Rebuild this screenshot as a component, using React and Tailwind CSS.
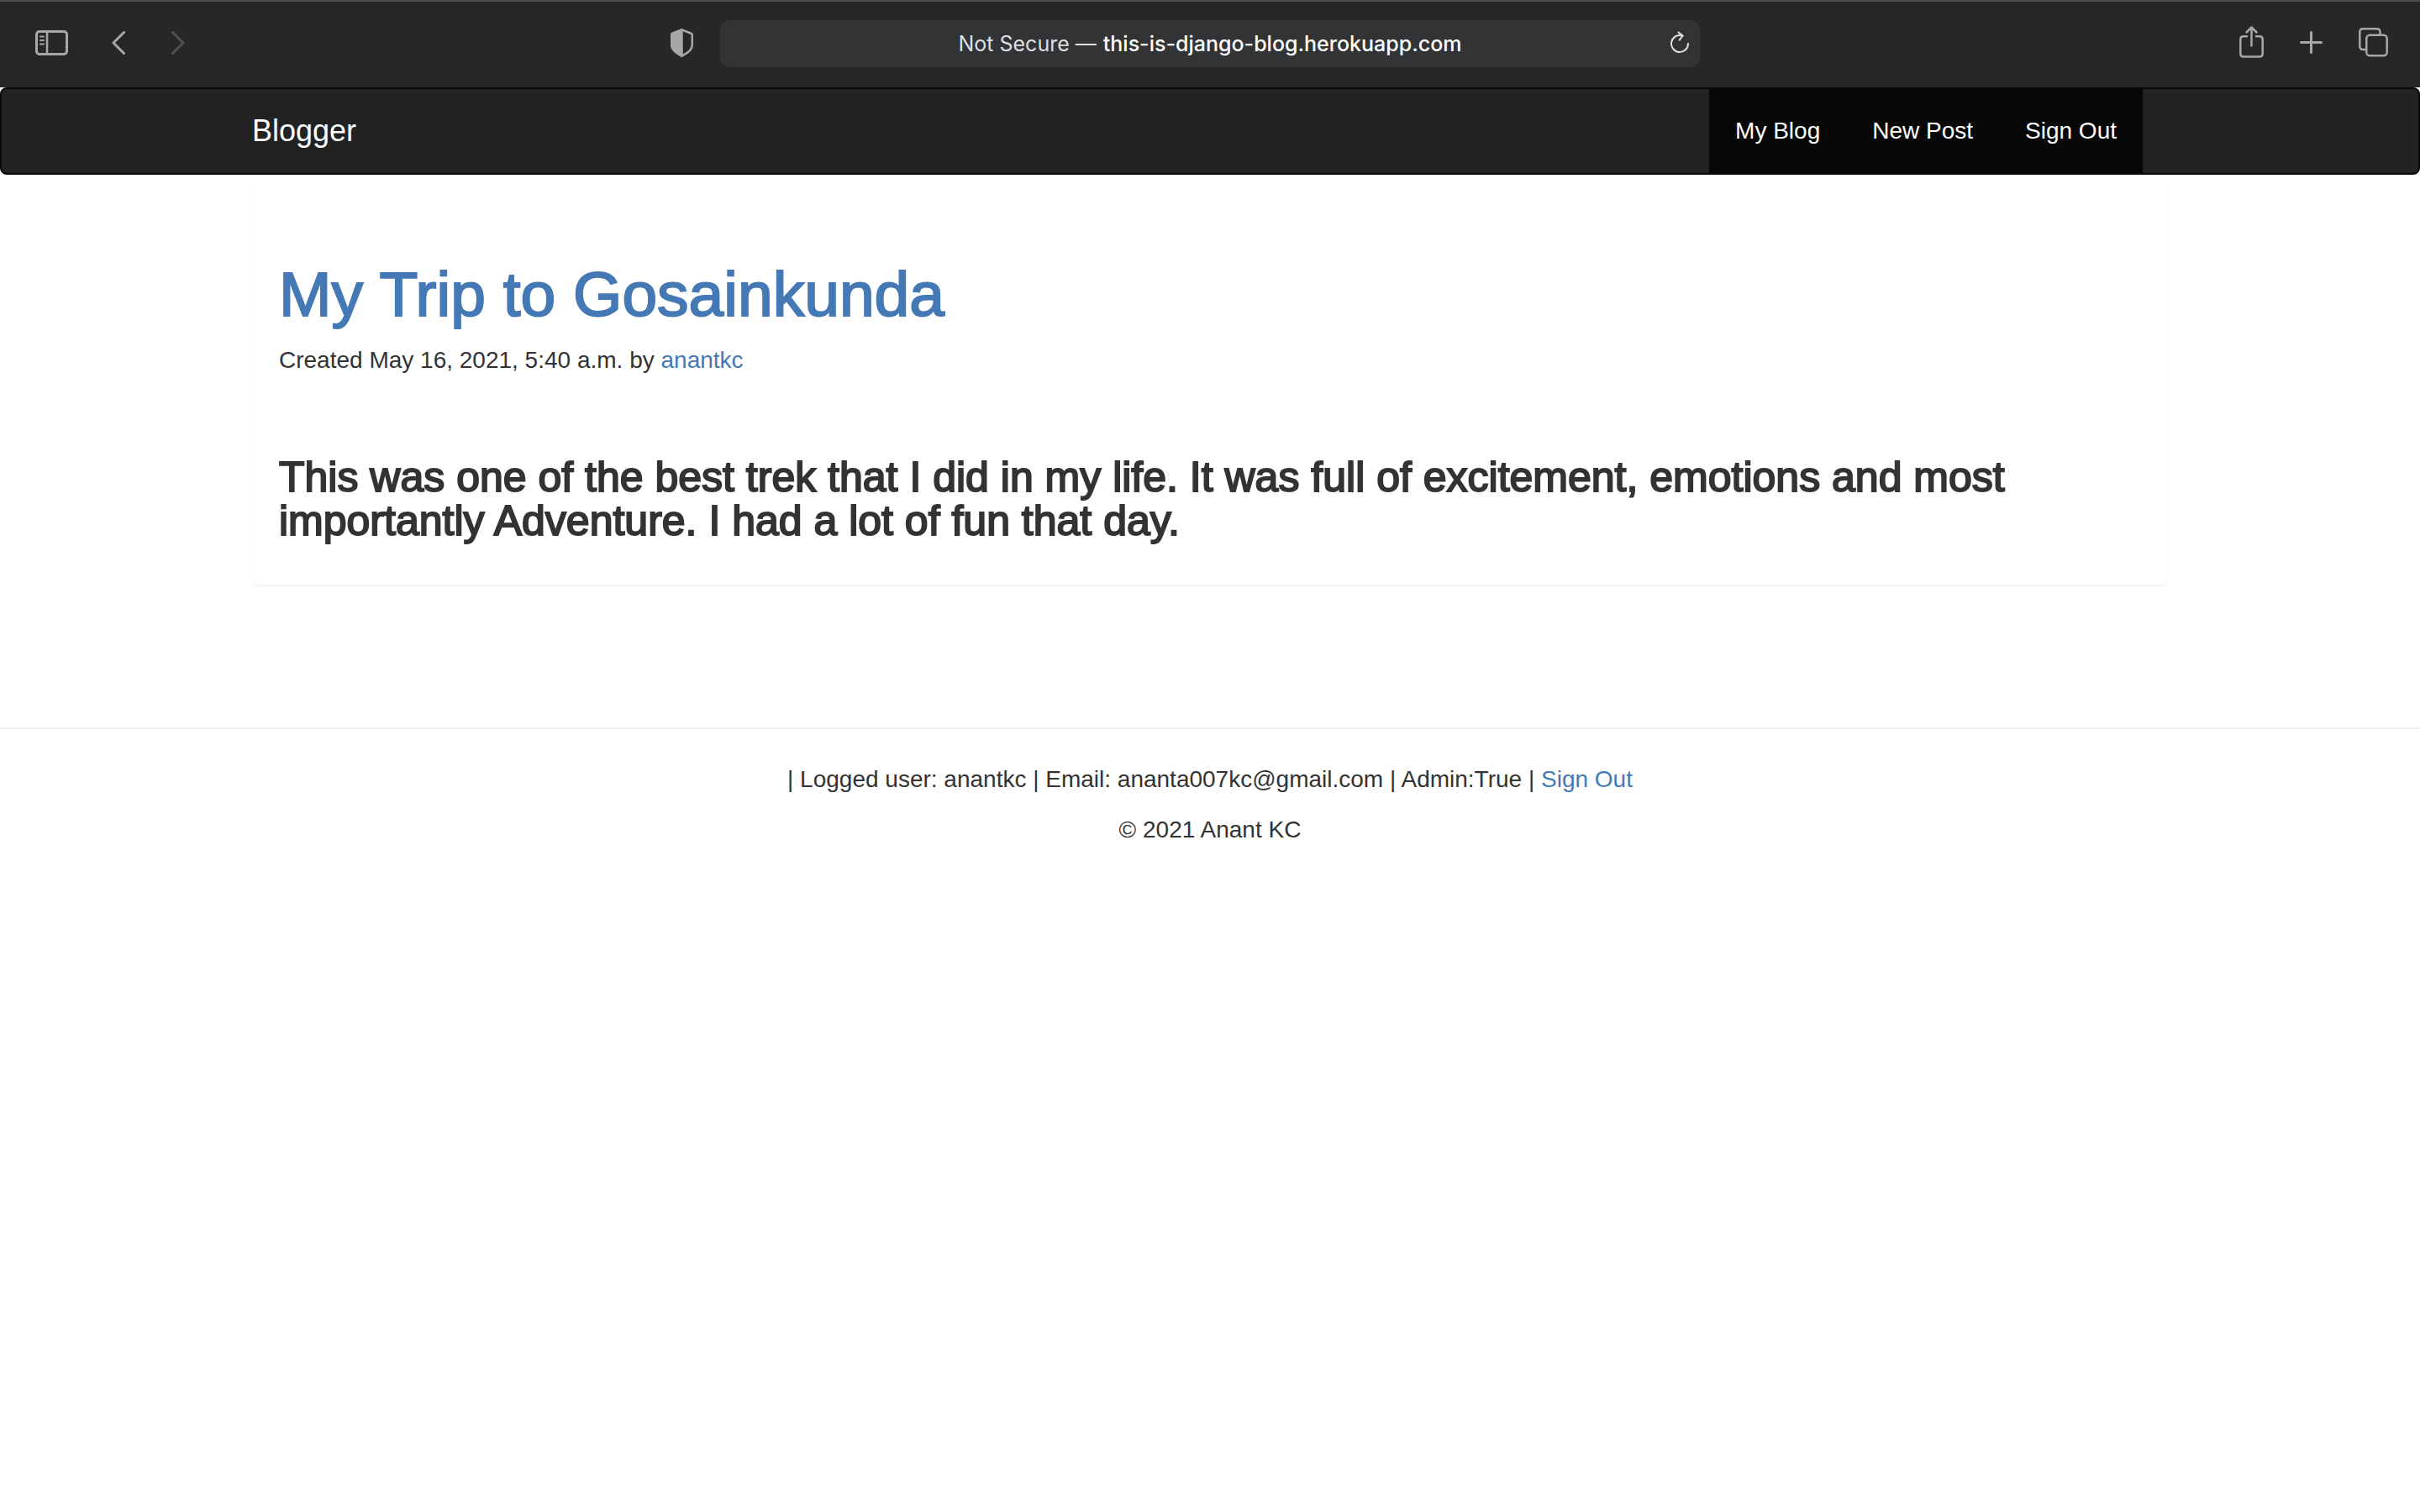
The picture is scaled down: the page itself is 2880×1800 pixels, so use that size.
function Icon({ width, height, stroke = 3, className = "", children }) {
  return (
    <svg
      width={width}
      height={height}
      viewBox={`0 0 ${width} ${height}`}
      fill="none"
      stroke="currentColor"
      strokeWidth={stroke}
      strokeLinecap="round"
      strokeLinejoin="round"
      aria-hidden="true"
      className={className}
    >
      {children}
    </svg>
  );
}

function BrowserBar() {
  return (
    <header className="grid h-[104px] grid-cols-[1fr_40.5%_1fr] items-center border-t-2 border-[#4b4d4f] bg-[#252729] pb-0.5 font-[Inter,sans-serif] text-[#a6a7a8]">
      <div className="flex items-center pr-8 pb-0.5 pl-[42px]">
        <button type="button" aria-label="Show sidebar">
          <Icon width={39} height={30}>
            <rect x="1.5" y="1.5" width="36" height="27" rx="3.5" />
            <path d="M14 2v26" strokeWidth="2.5" />
            <path d="M6 7.5h4M6 12h4M6 16.5h4" strokeWidth="2" />
          </Icon>
        </button>
        <button type="button" aria-label="Back" className="ml-[52px]">
          <Icon width={16} height={28}>
            <path d="M14.5 1.5 2 14l12.5 12.5" />
          </Icon>
        </button>
        <button type="button" aria-label="Forward" className="ml-[55px] text-[#505153]">
          <Icon width={16} height={28}>
            <path d="M1.5 1.5 14 14 1.5 26.5" />
          </Icon>
        </button>
        <button type="button" aria-label="Privacy report" className="ml-auto">
          <Icon width={27} height={34} stroke={2.5}>
            <path d="M13.5 1.5 25 6q.8.4.8 1.2V19c0 7-6.5 10.5-12.3 13.7C7.7 29.5 1.2 26 1.2 19V7.2Q1.2 6.4 2 6Z" />
            <path
              d="M13.5 1.5V32.7C7.7 29.5 1.2 26 1.2 19V7.2Q1.2 6.4 2 6Z"
              fill="currentColor"
            />
          </Icon>
        </button>
      </div>

      <div className="grid h-14 grid-cols-[1fr_auto_1fr] items-center rounded-xl bg-[#323335] px-3 text-[25px] leading-8">
        <div className="col-start-2 flex gap-2 whitespace-nowrap">
          <label htmlFor="address" className="text-[#dfdfe0]">
            Not Secure —
          </label>
          <input
            id="address"
            type="text"
            defaultValue="this-is-django-blog.herokuapp.com"
            className="bg-transparent font-medium text-white outline-none [field-sizing:content]"
          />
        </div>
        <button type="button" aria-label="Reload" className="justify-self-end pb-1 text-[#dfdfe0]">
          <Icon width={24} height={26} stroke={2}>
            <path d="M15.5 5.6A10 10 0 1 0 22 15" />
            <path d="M10.5 1.5 15.5 5.6 11.5 10.8" />
          </Icon>
        </button>
      </div>

      <div className="flex items-center justify-end pr-[38px] pb-1">
        <button type="button" aria-label="Share">
          <Icon width={29} height={38} stroke={2.5}>
            <path d="M9 12.3H5Q1.3 12.3 1.3 16V33Q1.3 36.5 5 36.5H24Q27.7 36.5 27.7 33V16Q27.7 12.3 24 12.3H20" />
            <path d="M14.5 23.5V2M8.5 7.5 14.5 1.5 20.5 7.5" />
          </Icon>
        </button>
        <button type="button" aria-label="New tab" className="ml-[43px]">
          <Icon width={27} height={27}>
            <path d="M13.5 1.5v24M1.5 13.5h24" />
          </Icon>
        </button>
        <button type="button" aria-label="Show tab overview" className="ml-[43px]">
          <Icon width={35} height={35} stroke={2.5}>
            <rect x="9.3" y="8.8" width="24.4" height="24.4" rx="4" />
            <path d="M9 26H5.3Q1.3 26 1.3 22V5.3Q1.3 1.3 5.3 1.3H21.5Q25.5 1.3 25.5 5.3V8.500" />
          </Icon>
        </button>
      </div>
    </header>
  );
}

const NAV_LINKS = ["My Blog", "New Post", "Sign Out"];

function Navbar() {
  return (
    <nav className="rounded-lg border-2 border-[#080808] bg-[#222] text-white">
      <div className="mx-auto flex max-w-[2340px] items-center justify-between pr-[60px] pl-[30px]">
        <a href="#home" className="text-4xl leading-10">
          Blogger
        </a>
        <ul className="flex bg-[#080808]">
          {NAV_LINKS.map((label) => (
            <li key={label}>
              <a href="#nav" className="block px-[31px] py-[30px] text-[28px] leading-10">
                {label}
              </a>
            </li>
          ))}
        </ul>
      </div>
    </nav>
  );
}

function Post() {
  return (
    <main className="mx-auto max-w-[2340px] px-[30px]">
      <article className="rounded-lg px-8 pt-[102px] pb-[50px] shadow-[0_2px_2px_rgba(0,0,0,0.05)]">
        <h1 className="text-[75px] leading-[80px] text-[#4479b5] [-webkit-text-stroke:2px_#4479b5]">
          <a href="#post">My Trip to Gosainkunda</a>
        </h1>
        <p className="mt-[19px] text-[28px] leading-10">
          Created May 16, 2021, 5:40 a.m. by{" "}
          <a href="#author" className="text-[#4479b5]">
            anantkc
          </a>
        </p>
        <h3 className="mt-[93px] text-[50px] leading-[52px] [-webkit-text-stroke:2px_#333]">
          This was one of the best trek that I did in my life. It was full of excitement, emotions and most
          importantly Adventure. I had a lot of fun that day.
        </h3>
      </article>
    </main>
  );
}

function Footer() {
  return (
    <footer className="mt-[170px] border-t-2 border-[#eee] pt-10 text-center text-[28px] leading-10">
      <p>
        | Logged user: anantkc | Email: ananta007kc@gmail.com | Admin:True |{" "}
        <a href="#sign-out" className="text-[#4479b5]">
          Sign Out
        </a>
      </p>
      <p className="mt-5">© 2021 Anant KC</p>
    </footer>
  );
}

export default function App() {
  return (
    <div className="min-h-screen bg-white font-['Liberation_Sans',Arial,sans-serif] text-[#333]">
      <BrowserBar />
      <Navbar />
      <Post />
      <Footer />
    </div>
  );
}
